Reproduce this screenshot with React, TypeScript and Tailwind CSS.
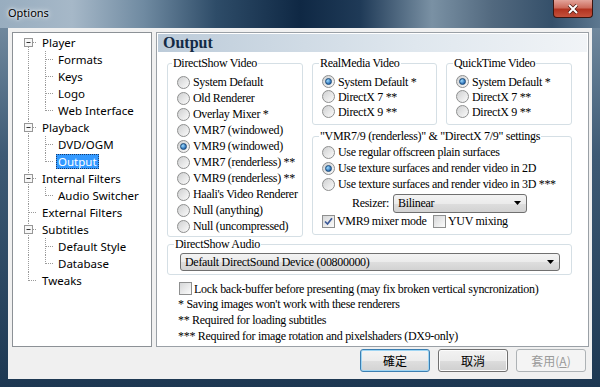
import React from 'react';

const serif = "font-['Liberation_Serif',serif] text-[12px] tracking-[-0.3px] text-black";

const tree = [
  { label: 'Player', lvl: 0, kids: true, first: true },
  { label: 'Formats', lvl: 1 },
  { label: 'Keys', lvl: 1 },
  { label: 'Logo', lvl: 1 },
  { label: 'Web Interface', lvl: 1, last: true },
  { label: 'Playback', lvl: 0, kids: true },
  { label: 'DVD/OGM', lvl: 1 },
  { label: 'Output', lvl: 1, last: true, selected: true },
  { label: 'Internal Filters', lvl: 0, kids: true },
  { label: 'Audio Switcher', lvl: 1, last: true },
  { label: 'External Filters', lvl: 0 },
  { label: 'Subtitles', lvl: 0, kids: true },
  { label: 'Default Style', lvl: 1 },
  { label: 'Database', lvl: 1, last: true },
  { label: 'Tweaks', lvl: 0, last: true },
];

const dot = { stroke: '#9a9a9a', strokeWidth: 1, strokeDasharray: '1 1', shapeRendering: 'crispEdges' as const };

function Connector({ lvl, kids, first, last }: { lvl: number; kids?: boolean; first?: boolean; last?: boolean }) {
  if (lvl === 0) {
    return (
      <svg width="25" height="17" className="shrink-0">
        <line x1="15.5" y1={first ? 9 : 0} x2="15.5" y2={last ? 9 : 17} {...dot} />
        <line x1="16" y1="8.5" x2="23" y2="8.5" {...dot} />
        {kids && (
          <>
            <rect x="11.5" y="4.5" width="8" height="8" fill="#f7f7f7" stroke="#979797" />
            <line x1="13.5" y1="8.5" x2="17.5" y2="8.5" stroke="#333" />
          </>
        )}
      </svg>
    );
  }
  return (
    <svg width="41" height="17" className="shrink-0">
      <line x1="15.5" y1="0" x2="15.5" y2="17" {...dot} />
      <line x1="32.5" y1="0" x2="32.5" y2={last ? 9 : 17} {...dot} />
      <line x1="33" y1="8.5" x2="40" y2="8.5" {...dot} />
    </svg>
  );
}

function Radio({ checked }: { checked?: boolean }) {
  return (
    <span className="w-[13px] h-[13px] rounded-full border border-[#8e8f8f] bg-[linear-gradient(135deg,#cfd0d1,#fbfbfb)] flex items-center justify-center shrink-0">
      {checked && (
        <span className="w-[7px] h-[7px] rounded-full border border-[#1b4a78] bg-[radial-gradient(circle_at_35%_35%,#9ddcff,#2a6db5_70%)]" />
      )}
    </span>
  );
}

function Check({ checked }: { checked?: boolean }) {
  return (
    <span className="w-[13px] h-[13px] border border-[#8e8f8f] bg-[linear-gradient(135deg,#d6d7d8,#fbfbfb)] flex items-center justify-center shrink-0">
      {checked && (
        <svg width="9" height="9" viewBox="0 0 9 9">
          <path d="M1 4.5 L3.5 7 L8 1.2" fill="none" stroke="#3d5a98" strokeWidth="1.7" />
        </svg>
      )}
    </span>
  );
}

function Opt({ label, checked, h }: { label: string; checked?: boolean; h: string }) {
  return (
    <div className={`flex items-center gap-[3px] ${h}`}>
      <Radio checked={checked} />
      <span className="whitespace-nowrap">{label}</span>
    </div>
  );
}

function Combo({ value, className }: { value: string; className: string }) {
  return (
    <div className={`flex items-center justify-between border border-[#707070] rounded-[3px] bg-[linear-gradient(#f3f3f3,#ebebeb_50%,#dedede_50%,#d2d2d2)] pl-[4px] pr-[5px] ${className}`}>
      <span className="whitespace-nowrap">{value}</span>
      <svg width="7" height="4" viewBox="0 0 7 4">
        <path d="M0 0h7L3.5 4z" fill="#000" />
      </svg>
    </div>
  );
}

export default function App() {
  return (
    <div className="w-[600px] h-[387px] flex flex-col bg-[linear-gradient(#7b92a6,#3d5a75_40%,#1d3852)]">
      {/* Title bar */}
      <div className="h-[28px] flex items-start justify-between bg-[linear-gradient(to_right,#98adbf_0%,#a6b8c8_12%,#6f8aa1_24%,#2e4c68_36%,#0f2844_50%,#1f3a57_60%,#7a91a4_72%,#52697f_82%,#35506a_92%,#5d7890_100%)]">
        <span className="ml-[8px] mt-[6px] font-['Noto_Sans',sans-serif] text-[11px] leading-[14px] text-black [text-shadow:0_0_6px_#fff,0_0_3px_#fff]">
          Options
        </span>
        <div className="mr-[7px] w-[40px] h-[18px] rounded-b-[4px] border border-t-0 border-[#3b1510] bg-[linear-gradient(#e3a49b,#cc6b5c_45%,#b23320_55%,#c4513c)] flex items-center justify-center">
          <svg width="12" height="10" viewBox="0 0 12 10">
            <path d="M2 1 L10 9 M10 1 L2 9" stroke="#4a1a12" strokeWidth="3.4" />
            <path d="M2 1 L10 9 M10 1 L2 9" stroke="#fff" strokeWidth="2" />
          </svg>
        </div>
      </div>

      {/* Client area */}
      <div className="mx-[8px] h-[351px] bg-[#f0f0f0] flex flex-col pt-[4px] pl-[4px] pr-[3px]">
        <div className="flex gap-[4px] h-[315px]">
          {/* Tree */}
          <div className="w-[140px] bg-white border border-[#8c9196] pt-[1px] font-['Noto_Sans',sans-serif] text-[11.5px] text-black">
            {tree.map((n) => (
              <div key={n.label} className="h-[17px] flex items-center">
                <Connector lvl={n.lvl} kids={n.kids} first={n.first} last={n.last} />
                <span
                  className={`ml-[2px] px-[2px] leading-[15px] whitespace-nowrap ${
                    n.selected ? 'bg-[#3399ff] text-white outline outline-dotted outline-[#1a3a6a] outline-offset-[-1px]' : ''
                  }`}
                >
                  {n.label}
                </span>
              </div>
            ))}
          </div>

          {/* Page */}
          <div className={`flex-1 bg-white border border-[#9aa0a6] ${serif}`}>
            <div className="mx-[1px] mt-[1px] h-[18px] bg-[linear-gradient(to_right,#bccbd9,#dfe7ee_60%,#f1f4f7)] flex items-center pl-[5px]">
              <span className="font-bold text-[16px] tracking-normal leading-[18px] text-[#132a45]">Output</span>
            </div>

            <div className="pl-[10px] pr-[16px] mt-[4px]">
              <div className="flex gap-[9px] items-start">
                {/* DirectShow Video */}
                <fieldset className="w-[136px] border border-[#d5dfe5] rounded-[3px] pl-[4px] pt-[4px] pb-[2px]">
                  <legend className="px-[1px] leading-[14px]">DirectShow Video</legend>
                  <div className="ml-[5px]">
                    <Opt h="h-[16px]" label="System Default" />
                    <Opt h="h-[16px]" label="Old Renderer" />
                    <Opt h="h-[16px]" label="Overlay Mixer *" />
                    <Opt h="h-[16px]" label="VMR7 (windowed)" />
                    <Opt h="h-[16px]" label="VMR9 (windowed)" checked />
                    <Opt h="h-[16px]" label="VMR7 (renderless) **" />
                    <Opt h="h-[16px]" label="VMR9 (renderless) **" />
                    <Opt h="h-[16px]" label="Haali's Video Renderer" />
                    <Opt h="h-[16px]" label="Null (anything)" />
                    <Opt h="h-[16px]" label="Null (uncompressed)" />
                  </div>
                </fieldset>

                <div className="w-[260px] flex flex-col">
                  <div className="flex gap-[9px]">
                    <fieldset className="w-[125px] border border-[#d5dfe5] rounded-[3px] pl-[6px] pt-[4px] pb-[5px]">
                      <legend className="px-[1px] leading-[14px]">RealMedia Video</legend>
                      <div className="ml-[3px]">
                        <Opt h="h-[15px]" label="System Default *" checked />
                        <Opt h="h-[15px]" label="DirectX 7 **" />
                        <Opt h="h-[15px]" label="DirectX 9 **" />
                      </div>
                    </fieldset>
                    <fieldset className="w-[126px] border border-[#d5dfe5] rounded-[3px] pl-[6px] pt-[4px] pb-[5px]">
                      <legend className="px-[1px] leading-[14px]">QuickTime Video</legend>
                      <div className="ml-[3px]">
                        <Opt h="h-[15px]" label="System Default *" checked />
                        <Opt h="h-[15px]" label="DirectX 7 **" />
                        <Opt h="h-[15px]" label="DirectX 9 **" />
                      </div>
                    </fieldset>
                  </div>

                  <fieldset className="mt-[4px] border border-[#d5dfe5] rounded-[3px] pl-[6px] pt-[1px] pb-[5px]">
                    <legend className="px-[1px] leading-[14px] whitespace-nowrap">"VMR7/9 (renderless)" &amp; "DirectX 7/9" settings</legend>
                    <div className="ml-[3px]">
                      <Opt h="h-[16px]" label="Use regular offscreen plain surfaces" />
                      <Opt h="h-[16px]" label="Use texture surfaces and render video in 2D" checked />
                      <Opt h="h-[16px]" label="Use texture surfaces and render video in 3D ***" />
                      <div className="mt-[1px] h-[20px] flex items-center">
                        <span className="ml-[30px] w-[41px]">Resizer:</span>
                        <Combo value="Bilinear" className="w-[134px] h-[19px]" />
                      </div>
                      <div className="h-[16px] flex items-center">
                        <Check checked />
                        <span className="ml-[2px] w-[96px] whitespace-nowrap">VMR9 mixer mode</span>
                        <Check />
                        <span className="ml-[2px] whitespace-nowrap">YUV mixing</span>
                      </div>
                    </div>
                  </fieldset>
                </div>
              </div>

              {/* DirectShow Audio */}
              <fieldset className="w-[405px] border border-[#d5dfe5] rounded-[3px] pl-[6px] pt-[2px] pb-[3px]">
                <legend className="px-[1px] leading-[14px]">DirectShow Audio</legend>
                <Combo value="Default DirectSound Device (00800000)" className="ml-[6px] w-[380px] h-[18px]" />
              </fieldset>

              <div className="mt-[6px] h-[15px] flex items-center gap-[2px] ml-[12px]">
                <Check />
                <span className="whitespace-nowrap">Lock back-buffer before presenting (may fix broken vertical syncronization)</span>
              </div>
              <div className="ml-[11px]">
                <div className="h-[16px] leading-[16px]">* Saving images won't work with these renderers</div>
                <div className="h-[16px] leading-[16px]">** Required for loading subtitles</div>
                <div className="h-[16px] leading-[16px]">*** Required for image rotation and pixelshaders (DX9-only)</div>
              </div>
            </div>
          </div>
        </div>

        {/* Buttons */}
        <div className="flex justify-end gap-[8px] mt-[2px] pr-[3px] font-['Noto_Sans_CJK_TC',sans-serif] text-[12px]">
          <button className="w-[70px] h-[23px] rounded-[3px] border border-[#3c7fb1] [box-shadow:inset_0_0_0_1px_#9fd5f3] bg-[linear-gradient(#f4f4f4,#ececec_50%,#dfdfdf_50%,#d3d3d3)] text-black leading-none">
            確定
          </button>
          <button className="w-[70px] h-[23px] rounded-[3px] border border-[#707070] [box-shadow:inset_0_0_0_1px_#fcfcfc] bg-[linear-gradient(#f2f2f2,#ebebeb_50%,#dddddd_50%,#cfcfcf)] text-black leading-none">
            取消
          </button>
          <button className="w-[70px] h-[23px] rounded-[3px] border border-[#adb2b5] bg-[#f4f4f4] text-[#9a9a9a] leading-none">
            套用(<span className="underline">A</span>)
          </button>
        </div>
      </div>
    </div>
  );
}
